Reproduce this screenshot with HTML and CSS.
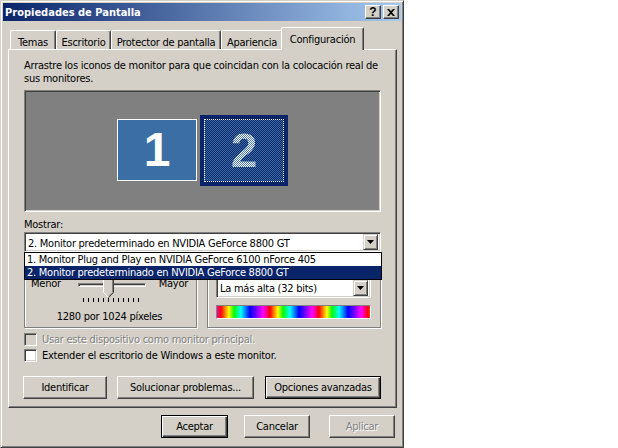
FILE: index.html
```html
<!DOCTYPE html>
<html lang="es">
<head>
<meta charset="utf-8">
<title>Propiedades de Pantalla</title>
<link rel="stylesheet" href="styles.css">
</head>
<body>
<div class="window">
  <div class="titlebar">
    <span class="title">Propiedades de Pantalla</span>
    <span class="tbtn help">?</span>
    <span class="tbtn close"><svg width="8" height="7" viewBox="0 0 8 7"><path d="M0 0h2l2 2 2-2h2L5 3.5 8 7H6L4 5 2 7H0l3-3.5z" fill="#000"/></svg></span>
  </div>
  <div class="client">
    <div class="tabs">
      <div class="tab t1">Temas</div>
      <div class="tab t2">Escritorio</div>
      <div class="tab t3">Protector de pantalla</div>
      <div class="tab t4">Apariencia</div>
      <div class="tab t5 sel">Configuración</div>
    </div>
    <div class="panel">
      <p class="intro">Arrastre los iconos de monitor para que coincidan con la colocación real de<br>sus monitores.</p>
      <div class="monitors">
        <div class="mon m1">1</div>
        <div class="mon m2"><div class="focus"><span class="digit2">2</span></div></div>
      </div>
      <div class="label">Mostrar:</div>
      <div class="combo main">
        <span class="ctext">2. Monitor predeterminado en NVIDIA GeForce 8800 GT</span>
        <span class="cbtn"><svg width="7" height="4" viewBox="0 0 7 4"><path d="M0 0h7L3.5 4z" fill="#000"/></svg></span>
        <div class="droplist">
          <div class="item">1. Monitor Plug and Play en NVIDIA GeForce 6100 nForce 405</div>
          <div class="item hl">2. Monitor predeterminado en NVIDIA GeForce 8800 GT</div>
        </div>
      </div>
      <div class="groups">
        <div class="group res">
          <div class="sliderrow">
            <span>Menor</span>
            <div class="slider">
              <div class="track"></div>
              <svg class="thumb" width="11" height="20" viewBox="0 0 11 20">
                <path d="M0 0H11V14.5L5.5 20L0 14.5Z" fill="#d4d0c8"/>
                <path d="M0.5 14.5V0.5H10" stroke="#fff" fill="none"/>
                <path d="M10.5 0V14.7L5.5 19.7" stroke="#404040" fill="none"/>
                <path d="M9.5 1.5V14.3L5.5 18.3" stroke="#808080" fill="none"/>
                <path d="M0.7 14.7L5 19" stroke="#fff" fill="none"/>
              </svg>
              <div class="ticks"></div>
            </div>
            <span class="mayor">Mayor</span>
          </div>
          <div class="restext">1280 por 1024 píxeles</div>
        </div>
        <div class="group col">
          <div class="combo small">
            <span class="ctext">La más alta (32 bits)</span>
            <span class="cbtn"><svg width="7" height="4" viewBox="0 0 7 4"><path d="M0 0h7L3.5 4z" fill="#000"/></svg></span>
          </div>
          <div class="colorbar"></div>
        </div>
      </div>
      <div class="check disabled"><span class="box"></span><span>Usar este dispositivo como monitor principal.</span></div>
      <div class="check second"><span class="box"></span><span>Extender el escritorio de Windows a este monitor.</span></div>
      <div class="btnrow">
        <div class="btn b1">Identificar</div>
        <div class="btn b2">Solucionar problemas...</div>
        <div class="btn b3 default">Opciones avanzadas</div>
      </div>
    </div>
    <div class="dlgbtns">
      <div class="btn ok default">Aceptar</div>
      <div class="btn cancel">Cancelar</div>
      <div class="btn apply disabledbtn">Aplicar</div>
    </div>
  </div>
</div>
</body>
</html>
```

FILE: styles.css
```css
* { box-sizing: border-box; margin: 0; padding: 0; }

body {
  background: #fff;
  font-family: "DejaVu Sans Condensed", "DejaVu Sans", sans-serif;
  font-stretch: semi-condensed;
  font-size: 11px;
  line-height: 13px;
  letter-spacing: -0.25px;
  color: #000;
}

.window {
  width: 404px;
  height: 448px;
  background: #d4d0c8;
  border: 1px solid;
  border-color: #d4d0c8 #404040 #404040 #d4d0c8;
  box-shadow: inset 1px 1px #fff, inset -1px -1px #808080;
  padding: 2px;
  display: flex;
  flex-direction: column;
}

.titlebar {
  height: 18px;
  flex: none;
  background: linear-gradient(to right, #0a246a, #a6caf0);
  display: flex;
  align-items: center;
  padding: 0 2px;
  color: #fff;
  font-weight: bold;
  letter-spacing: 0;
}
.title { flex: 1; }

.tbtn {
  width: 16px;
  height: 14px;
  background: #d4d0c8;
  border: 1px solid;
  border-color: #fff #404040 #404040 #fff;
  box-shadow: inset -1px -1px #808080;
  display: flex;
  align-items: center;
  justify-content: center;
  color: #000;
}
.help {
  margin-right: 2px;
  font-family: "Liberation Sans", sans-serif;
  font-size: 12px;
  font-weight: bold;
}

.client {
  flex: 1;
  display: flex;
  flex-direction: column;
  padding: 6px 4px 0 5px;
}

.tabs {
  display: flex;
  align-items: flex-end;
  height: 22px;
  padding-left: 2px;
  position: relative;
  z-index: 1;
}
.tab {
  height: 19px;
  border: 1px solid;
  border-bottom: none;
  border-color: #fff #404040 #404040 #fff;
  box-shadow: inset -1px 0 #808080;
  border-radius: 2px 2px 0 0;
  padding-top: 5px;
  text-align: center;
  white-space: nowrap;
  background: #d4d0c8;
}
.t1 { width: 46px; }
.t2 { width: 55px; }
.t3 { width: 110px; }
.t4 { width: 62px; }
.t5 { width: 79px; }
.tab.sel {
  height: 23px;
  width: 83px;
  margin: 0 -2px -1px -2px;
  position: relative;
  z-index: 2;
}

.panel {
  height: 359px;
  border: 1px solid;
  border-color: #fff #404040 #404040 #fff;
  box-shadow: inset -1px -1px #808080;
  padding: 9px 15px 0 15px;
  display: flex;
  flex-direction: column;
}

.intro { white-space: nowrap; }

.monitors {
  margin-top: 5px;
  height: 122px;
  flex: none;
  background: #808080;
  border: 1px solid;
  border-color: #808080 #fff #fff #808080;
  box-shadow: inset 1px 1px #404040, inset -1px -1px #d4d0c8;
  position: relative;
}
.mon {
  position: absolute;
  display: flex;
  align-items: center;
  justify-content: center;
  font-family: "Liberation Sans", sans-serif;
  font-weight: bold;
  font-size: 48px;
  line-height: 1;
  letter-spacing: 0;
}
.m1 {
  left: 92px;
  top: 28px;
  width: 80px;
  height: 62px;
  background: #3a6ea5;
  border: 1px solid #fff;
  color: #fff;
}
.m2 {
  left: 175px;
  top: 24px;
  width: 88px;
  height: 71px;
  border: 4px solid #0a246a;
  background: repeating-conic-gradient(#3a6ea5 0 25%, #0a246a 0 50%) 0 0 / 2px 2px;
}
.focus {
  width: 100%;
  height: 100%;
  border: 1px dotted #fff;
  display: flex;
  align-items: center;
  justify-content: center;
}
.digit2 {
  background: repeating-conic-gradient(#fff 0 25%, #4a78b0 0 50%) 0 0 / 2px 2px;
  -webkit-background-clip: text;
  background-clip: text;
  color: transparent;
}

.label { margin-top: 6px; }

.combo {
  position: relative;
  height: 20px;
  flex: none;
  margin-top: 1px;
  background: #fff;
  border: 1px solid;
  border-color: #808080 #fff #fff #808080;
  box-shadow: inset 1px 1px #404040, inset -1px -1px #d4d0c8;
  padding: 2px 2px 0 3px;
  display: flex;
  align-items: center;
  white-space: nowrap;
}
.ctext { flex: 1; }
.cbtn {
  width: 15px;
  height: 16px;
  margin-top: -2px;
  background: #d4d0c8;
  border: 1px solid;
  border-color: #d4d0c8 #404040 #404040 #d4d0c8;
  box-shadow: inset 1px 1px #fff, inset -1px -1px #808080;
  display: flex;
  align-items: center;
  justify-content: center;
}

.droplist {
  position: absolute;
  left: -1px;
  top: 19px;
  width: 358px;
  background: #fff;
  border: 1px solid #000;
  z-index: 5;
}
.item {
  height: 13px;
  padding-left: 2px;
  white-space: nowrap;
}
.item.hl { background: #0a246a; color: #fff; }

.groups {
  margin-top: 6px;
  height: 70px;
  flex: none;
  display: flex;
  gap: 10px;
}
.group {
  border: 1px solid #808080;
  box-shadow: 1px 1px 0 #fff, inset 1px 1px 0 #fff;
}
.res {
  width: 173px;
  padding: 18px 8px 0 6px;
}
.col {
  width: 174px;
  padding: 18px 9px 0 8px;
}

.sliderrow {
  display: grid;
  grid-template-columns: 47px 68px 1fr;
  height: 21px;
}
.mayor { justify-self: end; }
.slider { position: relative; }
.track {
  position: absolute;
  left: 0;
  right: 0;
  top: 6px;
  height: 4px;
  border: 1px solid;
  border-color: #808080 #fff #fff #808080;
  box-shadow: inset 1px 1px #404040;
}
.thumb {
  position: absolute;
  left: 25px;
  top: 1px;
}
.ticks {
  position: absolute;
  left: 5px;
  top: 21px;
  width: 56px;
  height: 4px;
  background: repeating-linear-gradient(to right, #000 0 1px, transparent 1px 5px);
}
.restext {
  margin-top: 12px;
  text-align: center;
  white-space: nowrap;
}

.combo.small {
  height: 21px;
  margin-top: 0;
}
.colorbar {
  margin-top: 7px;
  height: 14px;
  border: 1px solid;
  border-color: #808080 #fff #fff #808080;
  background: repeating-linear-gradient(90deg,
    #ff00a0 0px, #ff0000 4px, #ff8000 8px, #ffff00 12px, #00ff00 17px,
    #00ffff 24px, #0000ff 33px, #8000ff 40px, #ff00ff 46px, #ff00a0 49px);
}

.check {
  display: flex;
  align-items: center;
  gap: 5px;
  height: 13px;
  margin-top: 5px;
  white-space: nowrap;
}
.check.second { margin-top: 3px; }
.box {
  width: 13px;
  height: 13px;
  flex: none;
  background: #fff;
  border: 1px solid;
  border-color: #808080 #fff #fff #808080;
  box-shadow: inset 1px 1px #404040, inset -1px -1px #d4d0c8;
}
.check.disabled { color: #808080; text-shadow: 1px 1px #fff; }
.check.disabled .box { background: #d4d0c8; }

.btnrow {
  display: flex;
  margin-top: 14px;
  margin-left: -1px;
}
.btn {
  height: 23px;
  border: 1px solid;
  border-color: #fff #404040 #404040 #fff;
  box-shadow: inset -1px -1px #808080;
  display: flex;
  align-items: center;
  justify-content: center;
  white-space: nowrap;
  background: #d4d0c8;
}
.btn.default {
  border-color: #000;
  box-shadow: inset 1px 1px #fff, inset -1px -1px #404040, inset -2px -2px #808080;
}
.b1 { width: 84px; }
.b2 { width: 137px; margin-left: 10px; }
.b3 { width: 116px; margin-left: 11px; }

.dlgbtns {
  display: flex;
  justify-content: flex-end;
  margin-top: 7px;
  padding-right: 2px;
}
.ok { width: 67px; }
.cancel { width: 66px; margin-left: 16px; }
.apply { width: 66px; margin-left: 19px; }
.disabledbtn { color: #808080; text-shadow: 1px 1px #fff; }
```
